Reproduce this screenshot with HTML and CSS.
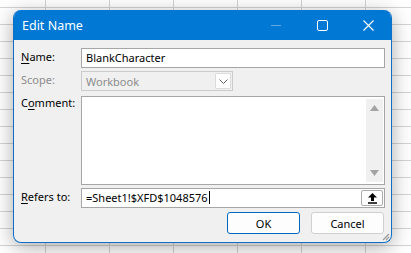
FILE: index.html
```html
<!DOCTYPE html>
<html>
<head>
    <meta charset="utf-8"/>
    <title>Edit Name</title>
    <link rel="stylesheet" href="styles.css">
</head>
<body>
<div class="dialog">
    <div class="titlebar">
        <span class="title">Edit Name</span>
        <div class="caption">
            <span class="cap-btn min"><svg width="10" height="10" viewBox="0 0 10 10"><path d="M0 5.5h10" stroke="#5ea9e4" stroke-width="1"/></svg></span>
            <span class="cap-btn"><svg width="11" height="11" viewBox="0 0 11 11"><rect x="0.5" y="0.5" width="10" height="10" rx="1.5" fill="none" stroke="#fff" stroke-width="1"/></svg></span>
            <span class="cap-btn"><svg width="11" height="11" viewBox="0 0 11 11"><path d="M0.5 0.5l10 10M10.5 0.5l-10 10" stroke="#fff" stroke-width="1.1"/></svg></span>
        </div>
    </div>
    <div class="content">
        <div class="form">
            <label class="lbl"><u>N</u>ame:</label>
            <div class="field">BlankCharacter</div>

            <label class="lbl disabled">Scope:</label>
            <div class="select">
                <span class="select-text">Workbook</span>
                <span class="select-arrow"><svg width="9" height="5" viewBox="0 0 9 5"><path d="M0.5 0.5l4 4 4-4" fill="none" stroke="#606060" stroke-width="1"/></svg></span>
            </div>

            <label class="lbl">C<u>o</u>mment:</label>
            <div class="memo">
                <div class="memo-text"></div>
                <div class="scrollbar">
                    <svg width="9" height="6" viewBox="0 0 9 6"><path d="M0 6L4.5 0 9 6z" fill="#a3a3a3"/></svg>
                    <svg width="9" height="6" viewBox="0 0 9 6"><path d="M0 0h9L4.5 6z" fill="#a3a3a3"/></svg>
                </div>
            </div>

            <label class="lbl"><u>R</u>efers to:</label>
            <div class="field refers">
                <span class="refers-text">=Sheet1!$XFD$1048576<span class="caret"></span></span>
                <span class="refedit"><svg width="11" height="12" viewBox="0 0 11 12"><path d="M5.5 1L1 5.5h3V9h3V5.5h3z" fill="#000"/><path d="M1 11h9" stroke="#000" stroke-width="1.6"/></svg></span>
            </div>
        </div>
        <div class="buttons">
            <button class="btn default">OK</button>
            <button class="btn">Cancel</button>
        </div>
        <span class="gripper"><svg width="8" height="8" viewBox="0 0 8 8"><path d="M7 1L1 7M7 4L4 7" stroke="#9a9a9a" stroke-width="1.2"/></svg></span>
    </div>
</div>
</body>
</html>
```

FILE: styles.css
```css
html,body{margin:0;padding:0;}
body{width:411px;height:253px;overflow:hidden;font-family:"Noto Sans",sans-serif;font-size:11px;color:#000;
    background-color:#fff;
    background-image:linear-gradient(to right,#d4d4d4 1px,transparent 1px),linear-gradient(to bottom,#d4d4d4 1px,transparent 1px);
    background-size:64px 17px;background-position:45px 7px;}
.dialog{width:377px;margin:10px 0 0 13px;border:1px solid #0f6fc6;border-top:none;border-radius:8px;background:#f0f0f0;box-shadow:0 4px 20px rgba(0,0,0,.34);overflow:hidden;}
.titlebar{height:30px;background:#0078d4;display:flex;align-items:center;color:#fff;}
.title{font-size:12.5px;padding-left:8px;flex:1;}
.caption{display:flex;height:30px;}
.cap-btn{width:46px;display:flex;align-items:center;justify-content:center;}
.cap-btn svg{display:block;}
.content{position:relative;padding:8px 6px 8px 6px;}
.form{display:grid;grid-template-columns:61px 1fr;row-gap:3px;}
.lbl{padding-left:1px;line-height:18px;}
.lbl u{text-decoration-thickness:1px;text-underline-offset:2px;}
.lbl.disabled{color:#8c8c8c;}
.field{height:18px;border:1px solid #a6a6a6;background:#fff;padding-left:4px;line-height:18px;}
.select{height:18px;width:150px;border:1px solid #cbcbcb;display:flex;align-items:center;color:#8c8c8c;}
.select-text{flex:1;padding-left:4px;}
.select-arrow{width:16px;height:16px;margin-right:1px;background:#fff;border:1px solid #dcdcdc;border-radius:1px;display:flex;align-items:center;justify-content:center;box-sizing:border-box;}
.memo{height:87px;border:1px solid #a6a6a6;background:#fff;margin-top:2px;display:flex;}
.memo-text{flex:1;}
.scrollbar{width:17px;margin:2px 1px 2px 0;background:#f0f0f0;display:flex;flex-direction:column;align-items:center;justify-content:space-between;padding:6px 0;}
.scrollbar svg{display:block;}
.refers{display:flex;align-items:center;padding-right:1px;}
.refers-text{flex:1;}
.caret{display:inline-block;width:1px;height:13px;background:#000;vertical-align:-2px;margin-left:1px;}
.refedit{width:20px;height:14px;border:1px solid #adadad;border-radius:2px;background:#fdfdfd;display:flex;align-items:center;justify-content:center;}
.buttons{display:flex;justify-content:flex-end;gap:11px;margin-top:4px;padding-right:1px;}
.btn{width:73px;height:22px;font-family:"Noto Sans",sans-serif;font-size:11px;background:#fdfdfd;border:1px solid #d0d0d0;border-radius:3px;padding:0;color:#000;}
.btn.default{border:1.5px solid #0067c0;}
.gripper{position:absolute;right:1px;bottom:1px;line-height:0;}
```
